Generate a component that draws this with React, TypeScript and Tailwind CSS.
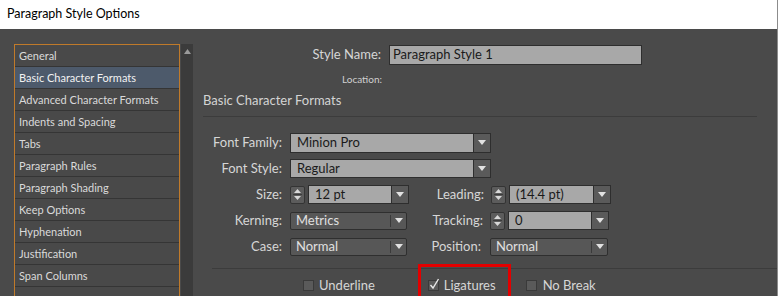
import React from "react";

const items = [
  "General",
  "Basic Character Formats",
  "Advanced Character Formats",
  "Indents and Spacing",
  "Tabs",
  "Paragraph Rules",
  "Paragraph Shading",
  "Keep Options",
  "Hyphenation",
  "Justification",
  "Span Columns",
  "",
];

const Tri = () => (
  <svg width="8" height="5" viewBox="0 0 8 5">
    <path d="M0 0 L8 0 L4 5 Z" fill="#e2e2e2" />
  </svg>
);

const Spinner = () => (
  <div className="flex h-[18px] w-[15px] flex-col items-center justify-center gap-[1px] rounded-[2px] border border-[#343434] bg-[#5c5c5c]">
    <svg width="7" height="4" viewBox="0 0 7 4">
      <path d="M0 4 L7 4 L3.5 0 Z" fill="#d8d8d8" />
    </svg>
    <div className="h-px w-[9px] bg-[#3c3c3c]" />
    <svg width="7" height="4" viewBox="0 0 7 4">
      <path d="M0 0 L7 0 L3.5 4 Z" fill="#d8d8d8" />
    </svg>
  </div>
);

const LightCombo = ({ text, w, h = 20 }: { text: string; w: number; h?: number }) => (
  <div className="flex" style={{ width: w, height: h }}>
    <div className="flex flex-1 items-center border border-[#2e2e2e] bg-[#a8a8a8] pl-[6px] text-[13px] text-[#1a1a1a]">
      {text}
    </div>
    <div className="flex w-[17px] items-center justify-center border border-l-0 border-[#2e2e2e] bg-[#5a5a5a]">
      <Tri />
    </div>
  </div>
);

const DarkCombo = ({ text, w }: { text: string; w: number }) => (
  <div
    className="flex h-[18px] items-center rounded-[2px] border border-[#2f2f2f] bg-[#575757] text-[13px] text-[#e0e0e0]"
    style={{ width: w }}
  >
    <div className="flex-1 pl-[5px]">{text}</div>
    <div className="h-[12px] w-px bg-[#3a3a3a]" />
    <div className="flex w-[15px] items-center justify-center">
      <Tri />
    </div>
  </div>
);

const Check = ({ checked }: { checked?: boolean }) => (
  <div className="relative h-[11px] w-[11px] border border-[#3a3a3a] bg-[#5a5a5a]">
    {checked && (
      <svg className="absolute left-[0px] top-[-3px]" width="11" height="12" viewBox="0 0 11 12">
        <path d="M1.5 7 L4 10 L9.5 1" stroke="#e8e8e8" strokeWidth="1.4" fill="none" />
      </svg>
    )}
  </div>
);

const Label = ({ children, w }: { children: React.ReactNode; w: number }) => (
  <div className="text-right text-[13px] text-[#d6d6d6]" style={{ width: w }}>
    {children}
  </div>
);

export default function App() {
  return (
    <div
      className="flex h-[296px] w-[778px] flex-col overflow-hidden border-r border-[#8c8c8c]"
      style={{ fontFamily: "Lato, 'Liberation Sans', sans-serif" }}
    >
      <div className="flex h-[29px] shrink-0 items-center bg-white pl-[7px] text-[12.5px] text-black">
        Paragraph Style Options
      </div>
      <div className="flex min-h-0 flex-1 bg-[#4a4a4a]">
        {/* list */}
        <div className="flex pl-[14px] pt-[15px]">
          <div className="w-[166px] border border-b-0 border-[#c07a2a] bg-[#494949]">
            {items.map((it, i) => (
              <div
                key={i}
                className={`flex h-[22px] shrink-0 items-center border-b border-[#353535] pl-[4px] pt-[2px] text-[11px] ${
                  i === 1 ? "bg-[#4d5a6b] text-[#f2f2f2]" : "text-[#dadada]"
                }`}
              >
                {it}
              </div>
            ))}
          </div>
          <div className="ml-[1px] flex w-[12px] justify-center bg-[#3b3b3b] pt-[5px]">
            <svg width="7" height="5" viewBox="0 0 7 5">
              <path d="M0 5 L7 5 L3.5 0 Z" fill="#9a9a9a" />
            </svg>
          </div>
        </div>

        {/* right */}
        <div className="flex flex-1 flex-col pt-[16px]">
          <div className="flex items-center">
            <Label w={188}>Style Name:</Label>
            <div className="ml-[8px] flex h-[20px] w-[253px] items-center border border-[#2e2e2e] bg-[#a8a8a8] pl-[3px] text-[13px] text-[#1a1a1a]">
              Paragraph Style 1
            </div>
          </div>
          <div className="mt-[7px] flex">
            <div className="w-[189px] text-right text-[10px] text-[#d0d0d0]">Location:</div>
          </div>
          <div className="mt-[4px] pl-[10px] text-[13px] text-[#d4d4d4]">Basic Character Formats</div>
          <div className="ml-[10px] mr-[20px] mt-[5px] h-px shrink-0 bg-[#3c3c3c]" />

          <div className="mt-[16px] flex h-[20px] shrink-0 items-center">
            <Label w={89}>Font Family:</Label>
            <div className="ml-[8px]">
              <LightCombo text="Minion Pro" w={201} />
            </div>
          </div>
          <div className="mt-[6px] flex h-[20px] shrink-0 items-center">
            <Label w={89}>Font Style:</Label>
            <div className="ml-[8px]">
              <LightCombo text="Regular" w={201} h={19} />
            </div>
          </div>
          <div className="mt-[6px] flex h-[20px] shrink-0 items-center">
            <Label w={89}>Size:</Label>
            <div className="ml-[8px] flex items-center gap-[3px]">
              <Spinner />
              <LightCombo text="12 pt" w={101} h={19} />
            </div>
            <Label w={75}>Leading:</Label>
            <div className="ml-[7px] flex items-center gap-[3px]">
              <Spinner />
              <LightCombo text="(14.4 pt)" w={102} h={19} />
            </div>
          </div>
          <div className="mt-[6px] flex h-[20px] shrink-0 items-center">
            <Label w={89}>Kerning:</Label>
            <div className="ml-[8px]">
              <DarkCombo text="Metrics" w={117} />
            </div>
            <Label w={76}>Tracking:</Label>
            <div className="ml-[7px] flex items-center gap-[3px]">
              <Spinner />
              <LightCombo text="0" w={101} h={19} />
            </div>
          </div>
          <div className="mt-[6px] flex h-[20px] shrink-0 items-center">
            <Label w={89}>Case:</Label>
            <div className="ml-[8px]">
              <DarkCombo text="Normal" w={117} />
            </div>
            <Label w={74}>Position:</Label>
            <div className="ml-[9px]">
              <DarkCombo text="Normal" w={118} />
            </div>
          </div>
          <div className="ml-[19px] mt-[11px] h-px shrink-0 bg-[#3c3c3c]" />

          <div className="relative mt-[7px] flex shrink-0 items-center text-[13px] text-[#d6d6d6]">
            <div className="ml-[110px] flex items-center gap-[5px]">
              <Check />
              <span>Underline</span>
            </div>
            <div className="ml-[53px] flex items-center gap-[5px]">
              <Check checked />
              <span>Ligatures</span>
            </div>
            <div className="ml-[30px] flex items-center gap-[6px]">
              <Check />
              <span>No Break</span>
            </div>
            <div className="absolute left-[225px] top-[-12px] h-[44px] w-[93px] border-[3px] border-[#e30000]" />
          </div>
        </div>
      </div>
    </div>
  );
}
